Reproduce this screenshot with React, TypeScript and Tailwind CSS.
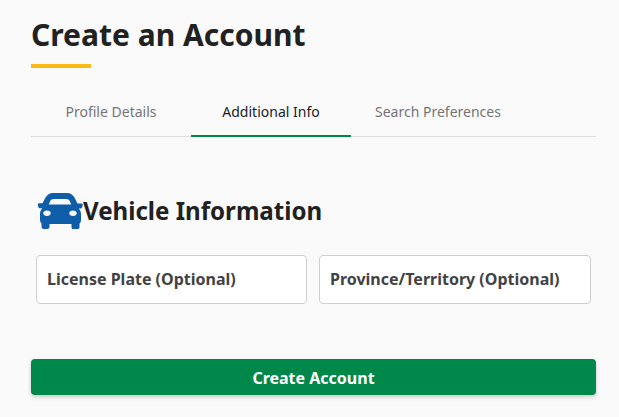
const font = { fontFamily: '"Noto Sans", sans-serif' };

function CarIcon() {
  return (
    <svg viewBox="0 0 46 36" className="w-[46px] h-[36px] shrink-0 mx-[0.5px]" fill="#0f5ca8">
      <path
        fillRule="evenodd"
        d="M16 0h14c3.500 0 6.500 2 8 5.500L40.500 10.500h3.700c1 0 1.700.8 1.500 1.800l-.5 1.700c-.3 1-1 1.500-2 1.500h-1.500c1.400 1.400 2.300 3.300 2.300 5.500v6c0 1.400-.5 2.700-1.500 3.700v3.300c0 1.300-1 2.300-2.300 2.300h-3.400c-1.300 0-2.300-1-2.300-2.300V31H12.500v2.700c0 1.300-1 2.300-2.300 2.300H6.800c-1.300 0-2.300-1-2.300-2.300v-3.300c-1-1-1.500-2.300-1.500-3.700v-6c0-2.200.9-4.100 2.300-5.500H3.300c-1 0-1.700-.5-2-1.500l-.5-1.700c-.2-1 .5-1.800 1.500-1.800h3.200L8 5.500C9.500 2 12.500 0 16 0zM17 6c-2 0-3.300.8-3.900 2.300L11.800 11.500h22.400l-1.300-3.200C32.300 6.800 31 6 29 6H17zM10 17.500c-2.200 0-3.800 1.200-3.800 2.800s1.600 2.700 3.800 2.700 3.800-1.100 3.800-2.700-1.600-2.800-3.800-2.800zM36 17.500c-2.200 0-3.800 1.200-3.800 2.800s1.600 2.700 3.800 2.700 3.800-1.100 3.800-2.700-1.600-2.800-3.800-2.800z"
      />
    </svg>
  );
}

function Tab({ label, active }: { label: string; active?: boolean }) {
  return (
    <div
      className={
        active
          ? "min-w-[160px] px-6 h-[49px] pb-px flex items-center justify-center text-[14px] text-[#212121] border-b-2 border-[#00884b]"
          : "min-w-[160px] px-6 h-[46px] flex items-center justify-center text-[14px] text-[#757575]"
      }
    >
      {label}
    </div>
  );
}

function Field({ label, width }: { label: string; width: string }) {
  return (
    <div className={`${width} h-[49px] bg-white border border-[#cfcfcf] rounded-[4px] flex items-center px-[10px] pb-[2px]`}>
      <span className="text-[16px] font-bold text-[#424242]">{label}</span>
    </div>
  );
}

export default function App() {
  return (
    <div style={font} className="w-[619px] h-[417px] bg-[#fafafa] overflow-hidden pl-[31px] pr-[23px] pt-[14px]">
      <h1 className="text-[30px] leading-[41px] font-bold text-[#212121]">Create an Account</h1>
      <div className="w-[60px] h-[4px] bg-[#fdb913] mt-[9px]" />

      <div className="flex mt-[20px] border-b border-[#dcdcdc] h-[49px]">
        <Tab label="Profile Details" />
        <Tab label="Additional Info" active />
        <Tab label="Search Preferences" />
      </div>

      <div className="flex items-center mt-[51px] ml-[5px] h-[46px]">
        <CarIcon />
        <h2 className="text-[24.1px] leading-[32px] font-bold text-[#212121]">Vehicle Information</h2>
      </div>

      <div className="flex gap-[12px] mt-[21px] ml-[5px]">
        <Field label="License Plate (Optional)" width="w-[271px]" />
        <Field label="Province/Territory (Optional)" width="w-[272px]" />
      </div>

      <button className="block w-full h-[36px] mt-[55px] pt-px bg-[#00884b] rounded-[4px] text-white text-[16px] font-bold shadow-[0_2px_4px_rgba(0,0,0,0.2)]">
        Create Account
      </button>
    </div>
  );
}
